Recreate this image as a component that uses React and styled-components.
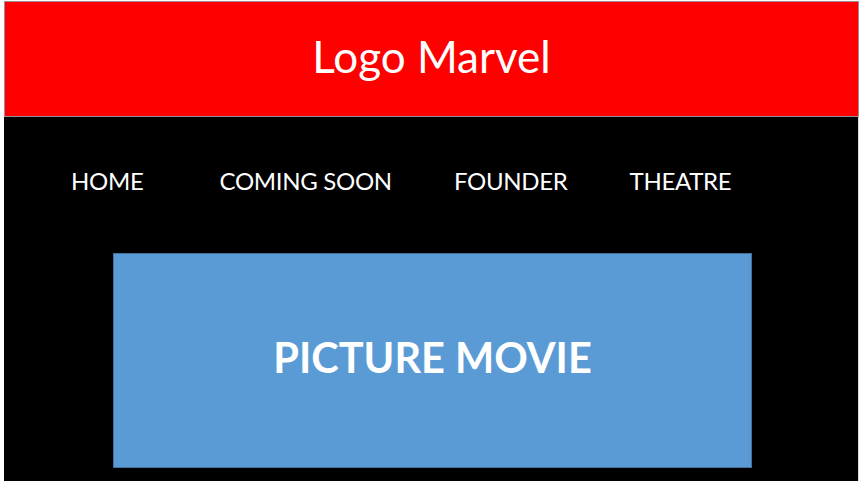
import React from "react";
import styled, { createGlobalStyle } from "styled-components";

const GlobalStyle = createGlobalStyle`
  body {
    margin: 0;
    background: #ffffff;
    font-family: Lato, "Open Sans", sans-serif;
  }
`;

// label + space after it, to sit each link where the mockup has it
const links = [
  { label: "HOME", gap: 76 },
  { label: "COMING SOON", gap: 62 },
  { label: "FOUNDER", gap: 62 },
  { label: "THEATRE", gap: 0 },
];

function App() {
  return (
    <>
      <GlobalStyle />
      <Frame>
        <Header>Logo Marvel</Header>
        <Body>
          <Nav>
            {links.map((link) => (
              <NavItem key={link.label} $gap={link.gap}>
                {link.label}
              </NavItem>
            ))}
          </Nav>
          <Picture>PICTURE MOVIE</Picture>
        </Body>
      </Frame>
    </>
  );
}

export default App;

const Frame = styled.div`
  width: 855px;
  margin: 1px 0 0 4px;
  display: flex;
  flex-direction: column;
`;

const Header = styled.div`
  box-sizing: border-box;
  height: 116px;
  background: #ff0000;
  border: 1px solid #9c8f9c;
  display: flex;
  align-items: center;
  justify-content: center;
  color: #ffffff;
  font-size: 44px;
  padding: 0 0 6px 0;
`;

const Body = styled.div`
  height: 364px;
  background: #000000;
  border-right: 1px solid #d9d9d9;
  display: flex;
  flex-direction: column;
`;

const Nav = styled.div`
  height: 126px;
  display: flex;
  align-items: center;
  padding-left: 67px;
  margin-bottom: 10px;
`;

const NavItem = styled.div`
  color: #ffffff;
  font-size: 24px;
  letter-spacing: -0.3px;
  margin-right: ${(p) => p.$gap}px;
`;

const Picture = styled.div`
  box-sizing: border-box;
  width: 639px;
  height: 215px;
  margin-left: 109px;
  padding-bottom: 8px;
  background: #5b9bd5;
  border: 1px solid #41719c;
  display: flex;
  align-items: center;
  justify-content: center;
  color: #ffffff;
  font-size: 41.5px;
  font-weight: 700;
`;
